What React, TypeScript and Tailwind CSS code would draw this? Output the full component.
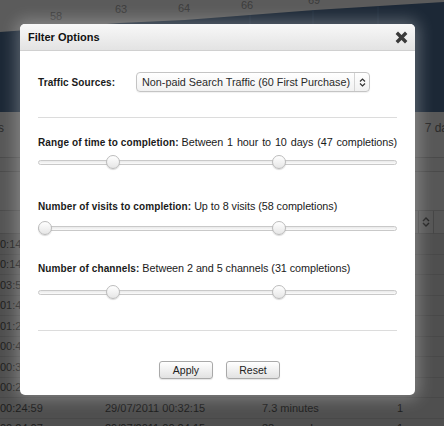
import React from "react";

const rows = [
  ["0:14", "", "", ""],
  ["0:14", "", "", ""],
  ["03:50", "", "", ""],
  ["01:46", "", "", ""],
  ["01:23", "", "", ""],
  ["00:42", "", "", ""],
  ["00:31", "", "", ""],
  ["00:28", "", "", ""],
  ["00:24:59", "29/07/2011 00:32:15", "7.3 minutes", "1"],
  ["00:24:07", "29/07/2011 00:24:15", "38 seconds", "1"],
];

function Chart() {
  return (
    <svg width="444" height="112" className="block">
      <rect width="444" height="112" fill="#5b5b5b" />
      <polygon
        points="0,32 55,28 120,23 185,20 250,15 315,10 444,2 444,112 0,112"
        fill="#1c2836"
      />
      <line x1="250" y1="15" x2="250" y2="112" stroke="#223040" />
      <line x1="313" y1="10" x2="313" y2="112" stroke="#223040" />
      <line x1="378" y1="6" x2="378" y2="112" stroke="#223040" />
      <g fill="#3c3c3c" fontSize="11" fontFamily="'Liberation Sans', Arial, sans-serif">
        <text x="50" y="20">58</text>
        <text x="115" y="13">63</text>
        <text x="178" y="12">64</text>
        <text x="241" y="9">66</text>
        <text x="308" y="4">69</text>
      </g>
    </svg>
  );
}

function Slider({ a, b }: { a: number; b: number }) {
  return (
    <div className="relative h-[14px]">
      <div className="absolute left-0 right-0 top-[5px] h-[5px] rounded-full border border-[#c9c9c9] bg-gradient-to-b from-[#e9e9e9] to-[#fbfbfb]" />
      {[a, b].map((x, i) => (
        <div
          key={i}
          className="absolute top-0 h-[14px] w-[14px] rounded-full border border-[#bcbcbc] bg-gradient-to-b from-[#ffffff] to-[#e6e6e6] shadow-[0_1px_1px_rgba(0,0,0,0.15)]"
          style={{ left: x }}
        />
      ))}
    </div>
  );
}

function Label({ bold, rest, wide }: { bold: string; rest: string; wide?: boolean }) {
  return (
    <p className="h-[14px] whitespace-nowrap text-[10.8px] leading-[14px] text-[#1a1a1a]">
      <span className="text-[10px] font-bold tracking-[0.1px]">{bold}</span>{" "}
      <span className={wide ? "tracking-[-0.05px] [word-spacing:0.9px]" : "tracking-[-0.05px]"}>{rest}</span>
    </p>
  );
}

export default function App() {
  return (
    <div
      className="relative h-[426px] w-[444px] overflow-hidden bg-[#525252]"
      style={{ fontFamily: "'Liberation Sans', Arial, sans-serif" }}
    >
      <Chart />
      <div className="flex h-[45px] items-start justify-between bg-[#585858] pt-[7px] text-[12px] text-[#2a2a2a]">
        <span className="-ml-[2px]">s</span>
        <span className="mr-[-4px]">7 da</span>
      </div>
      <div className="h-[15px] border-y border-[#4a4a4a] bg-[#565656]" />
      <div className="h-[38px] bg-[#575757]" />
      <div className="flex h-[23px] items-center justify-end border-t border-[#4a4a4a] bg-[#555555] pr-[10px]">
        <div className="flex h-[23px] w-[16px] items-center justify-center border-x border-[#464646]">
          <svg width="8" height="10" viewBox="0 0 8 10">
            <path d="M1 4 L4 1 L7 4 M1 6 L4 9 L7 6" fill="none" stroke="#222" strokeWidth="1.4" />
          </svg>
        </div>
      </div>
      <div className="bg-[#4f4f4f] text-[11px] text-[#1c1c1c]">
        {rows.map((r, i) => (
          <div key={i} className="flex h-[20.5px] items-center border-t border-[#484848]">
            <span className={i < 8 ? "w-[20px] text-right" : "w-[36px] text-right"}>{r[0]}</span>
            <span className={i < 8 ? "ml-[85px] w-[157px]" : "ml-[69px] w-[157px]"}>{r[1]}</span>
            <span className="w-[135px]">{r[2]}</span>
            <span>{r[3]}</span>
          </div>
        ))}
      </div>

      {/* modal */}
      <div className="absolute left-[20px] top-[24px] w-[395px] rounded-[5px] bg-white shadow-[0_0_16px_4px_rgba(255,255,255,0.28)]">
        <div className="flex h-[27px] items-center justify-between rounded-t-[5px] border-b border-[#d0d0d0] bg-gradient-to-b from-[#f8f8f8] to-[#e3e3e3] pl-[8px] pr-[7px]">
          <span className="text-[11px] font-bold text-[#111]">Filter Options</span>
          <svg width="13" height="13" viewBox="0 0 13 13">
            <path d="M1.8 1.8 L11.2 11.2 M11.2 1.8 L1.8 11.2" stroke="#3a3a3a" strokeWidth="3.4" />
          </svg>
        </div>
        <div className="px-[18px] pb-[16px] pt-[21px]">
          <div className="flex h-[20px] items-center">
            <span className="w-[98px] text-[10px] font-bold tracking-[0.1px] text-[#1a1a1a]">Traffic Sources:</span>
            <div className="flex h-[20px] w-[234px] items-center rounded-[4px] border border-[#c4c4c4] bg-gradient-to-b from-[#ffffff] to-[#f1f1f1] shadow-[0_1px_1px_rgba(0,0,0,0.06)]">
              <span className="flex-1 whitespace-nowrap pl-[5px] text-[10.8px] text-[#2a2a2a]">
                Non-paid Search Traffic (60 First Purchase)
              </span>
              <div className="flex h-full w-[15px] items-center justify-center border-l border-[#d4d4d4]">
                <svg width="7" height="9" viewBox="0 0 7 9">
                  <path d="M1 3.5 L3.5 1 L6 3.5 M1 5.5 L3.5 8 L6 5.5" fill="none" stroke="#333" strokeWidth="1.2" />
                </svg>
              </div>
            </div>
          </div>
          <div className="mt-[25px] h-px bg-[#dcdcdc]" />
          <div className="mt-[17px]">
            <Label wide bold="Range of time to completion:" rest="Between 1 hour to 10 days (47 completions)" />
          </div>
          <div className="mt-[6px]">
            <Slider a={68} b={234} />
          </div>
          <div className="mt-[30px]">
            <Label bold="Number of visits to completion:" rest="Up to 8 visits (58 completions)" />
          </div>
          <div className="mt-[8px]">
            <Slider a={0} b={234} />
          </div>
          <div className="mt-[26px]">
            <Label bold="Number of channels:" rest="Between 2 and 5 channels (31 completions)" />
          </div>
          <div className="mt-[10px]">
            <Slider a={68} b={234} />
          </div>
          <div className="mt-[31px] h-px bg-[#dcdcdc]" />
          <div className="mt-[30px] flex justify-center gap-[13px] pl-[4px]">
            {["Apply", "Reset"].map((t) => (
              <button
                key={t}
                className="h-[18px] w-[54px] rounded-[3px] border border-[#a9a9a9] bg-gradient-to-b from-[#ffffff] to-[#e2e2e2] text-[10.5px] leading-none text-[#222] shadow-[0_1px_1px_rgba(0,0,0,0.1)]"
              >
                {t}
              </button>
            ))}
          </div>
        </div>
      </div>
    </div>
  );
}
